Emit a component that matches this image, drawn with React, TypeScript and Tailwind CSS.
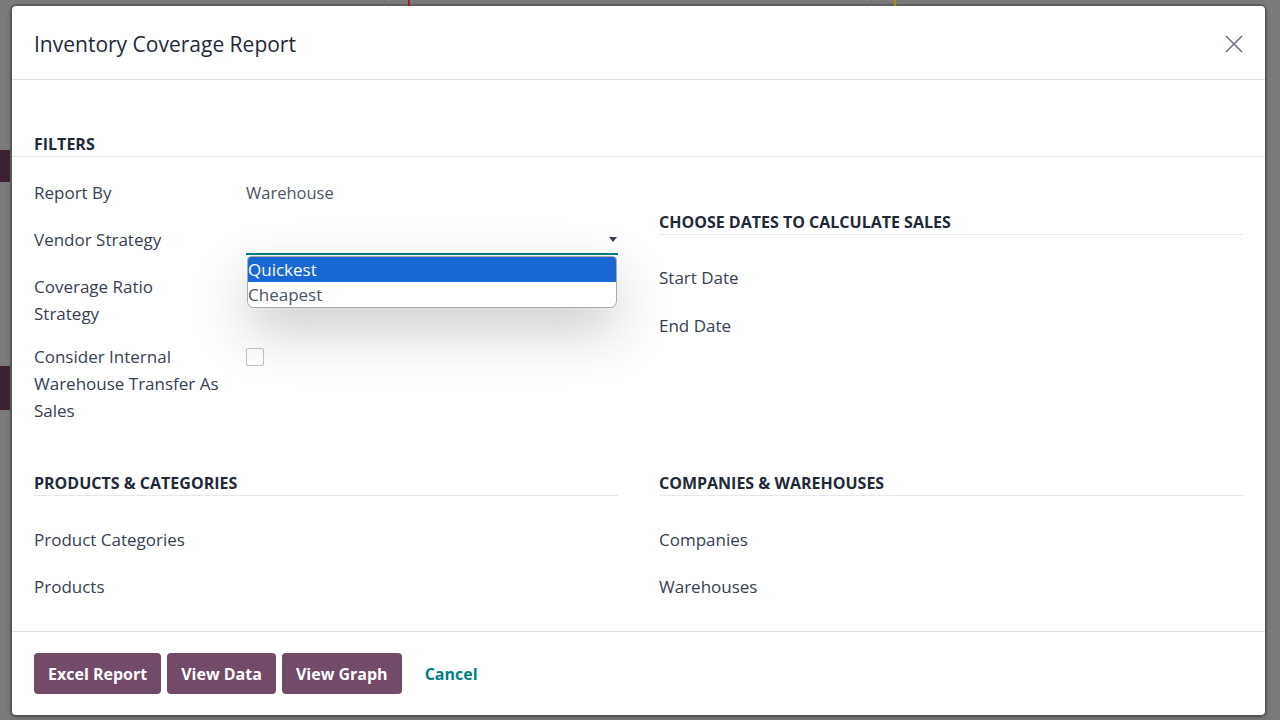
import React from "react";

const font = { fontFamily: '"Open Sans", "Noto Sans", Arial, sans-serif' };

interface RowProps {
  label: React.ReactNode;
  children?: React.ReactNode;
  className?: string;
}

const FieldRow: React.FC<RowProps> = ({ label, children, className }) => (
  <div className={`grid grid-cols-[212px_1fr] ${className ?? ""}`}>
    <div className="text-[17px] leading-[27px] font-medium text-[#374151]">{label}</div>
    <div className="relative">{children}</div>
  </div>
);

const SectionTitle: React.FC<{ title: string; className?: string }> = ({ title, className }) => (
  <div
    className={`h-[25px] leading-[24px] border-b border-[#e5e7eb] text-[16px] font-bold text-[#1f2937] ${className ?? ""}`}
  >
    {title}
  </div>
);

const btn = "h-[41px] px-[14px] rounded-[4px] bg-[#714b67] text-white text-[16px] font-bold";

export default function App() {
  return (
    <div className="relative w-[1280px] h-[720px] overflow-hidden bg-[#7b7b7b] pl-[12px] pt-[6px]" style={font}>
      {/* backdrop bits peeking out */}
      <div className="absolute left-0 top-[150px] w-[10px] h-[32px] bg-[#3b2232]" />
      <div className="absolute left-0 top-[366px] w-[10px] h-[44px] bg-[#3b2232]" />
      <div className="absolute left-[408px] top-0 w-[2px] h-[6px] bg-[#a11d2b]" />
      <div className="absolute left-[894px] top-0 w-[2px] h-[6px] bg-[#b8860b]" />
      <div className="absolute left-[384px] top-0 w-px h-[6px] bg-[#6e6e6e]" />
      <div className="absolute left-[871px] top-0 w-px h-[6px] bg-[#6e6e6e]" />

      <div className="w-[1253px] h-[709px] bg-white rounded-[4px] flex flex-col shadow-[0_0_0_2px_rgba(0,0,0,0.18),0_2px_6px_rgba(0,0,0,0.3)]">
        {/* header */}
        <div className="h-[74px] shrink-0 border-b border-[#dee2e6] flex items-center justify-between pl-[22px] pr-[21px]">
          <h4 className="text-[21px] text-[#1f2937] font-normal leading-none pt-[3px]">Inventory Coverage Report</h4>
          <svg width="20" height="20" viewBox="0 0 20 20" className="text-[#6b7280] mt-[2px]">
            <path d="M2 2 L18 18 M18 2 L2 18" stroke="currentColor" strokeWidth="1.6" fill="none" />
          </svg>
        </div>

        {/* body */}
        <div className="flex-1">
          <div className="mt-[52px] h-[25px] leading-[24px] border-b border-[#e5e7eb] px-[22px] text-[16px] font-bold text-[#1f2937]">
            FILTERS
          </div>

          <div className="grid grid-cols-2 gap-x-[41px] px-[22px]">
            {/* left */}
            <div>
              <FieldRow label="Report By" className="mt-[22px]">
                <div className="text-[16.5px] leading-[27px] text-[#4b5563]">Warehouse</div>
              </FieldRow>
              <FieldRow label="Vendor Strategy" className="mt-[20px]">
                <div className="h-[29px] border-b-2 border-[#017e84] flex items-center justify-end pr-[1px]">
                  <svg width="8" height="5" viewBox="0 0 8 5">
                    <path d="M0 0 H8 L4 5 Z" fill="#374151" />
                  </svg>
                </div>
                <div className="absolute left-[1px] right-[1px] top-[30px] z-10 bg-white border border-[#a8a8a8] rounded-b-[7px] rounded-t-[4px] overflow-hidden shadow-[0_22px_55px_rgba(0,0,0,0.22)]">
                  <div className="h-[25px] leading-[25px] bg-[#1967d2] text-white text-[17px]">Quickest</div>
                  <div className="h-[25px] leading-[25px] text-[#4b5563] text-[17px]">Cheapest</div>
                </div>
              </FieldRow>
              <FieldRow
                label={
                  <>
                    Coverage Ratio
                    <br />
                    Strategy
                  </>
                }
                className="mt-[18px]"
              />
              <FieldRow
                label={
                  <>
                    Consider Internal
                    <br />
                    Warehouse Transfer As
                    <br />
                    Sales
                  </>
                }
                className="mt-[16px]"
              >
                <div className="mt-[5px] w-[18px] h-[18px] border border-[#c4c4c4] rounded-[2px] bg-white" />
              </FieldRow>
            </div>

            {/* right */}
            <div>
              <SectionTitle title="CHOOSE DATES TO CALCULATE SALES" className="mt-[53px]" />
              <FieldRow label="Start Date" className="mt-[29px]" />
              <FieldRow label="End Date" className="mt-[21px]" />
            </div>
          </div>

          <div className="grid grid-cols-2 gap-x-[41px] px-[22px] mt-[47px]">
            <div>
              <SectionTitle title="PRODUCTS & CATEGORIES" />
              <FieldRow label="Product Categories" className="mt-[30px]" />
              <FieldRow label="Products" className="mt-[20px]" />
            </div>
            <div>
              <SectionTitle title="COMPANIES & WAREHOUSES" />
              <FieldRow label="Companies" className="mt-[30px]" />
              <FieldRow label="Warehouses" className="mt-[20px]" />
            </div>
          </div>
        </div>

        {/* footer */}
        <div className="shrink-0 border-t border-[#dee2e6] px-[22px] pt-[21px] pb-[21px] flex items-center gap-[6px]">
          <button className={btn}>Excel Report</button>
          <button className={btn}>View Data</button>
          <button className={btn}>View Graph</button>
          <button className="h-[41px] px-[17px] text-[#017e84] text-[16px] font-bold">Cancel</button>
        </div>
      </div>
    </div>
  );
}
